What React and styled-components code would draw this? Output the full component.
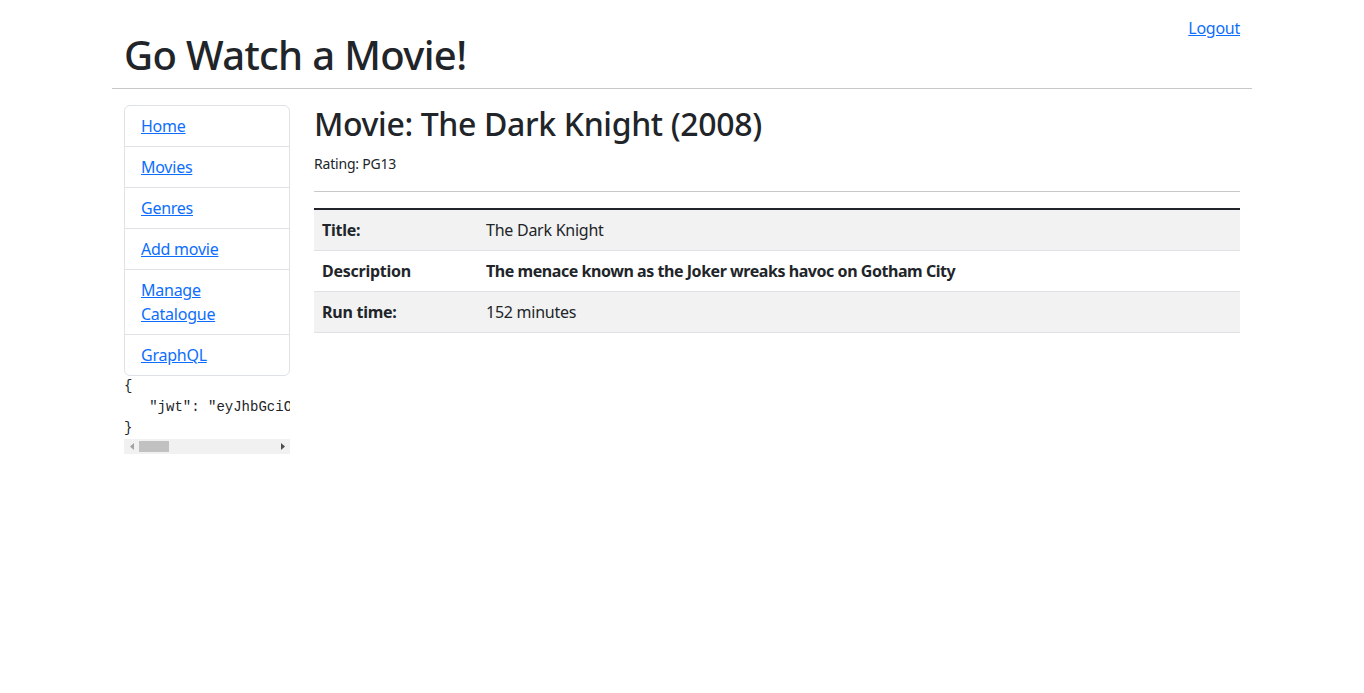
import React from "react";
import styled, { createGlobalStyle } from "styled-components";

const GlobalStyle = createGlobalStyle`
  *, *::before, *::after { box-sizing: border-box; }
  html, body { margin: 0; padding: 0; background: #fff; }
  body {
    font-family: "Noto Sans", "Open Sans", sans-serif;
    font-size: 16px;
    line-height: 1.5;
    letter-spacing: -0.25px;
    color: #212529;
  }
`;

const Container = styled.div`
  width: 1140px;
  margin: 0 auto;
`;

const Header = styled.header`
  display: flex;
  justify-content: space-between;
  align-items: flex-start;
  padding: 0 12px;
`;

const Title = styled.h1`
  margin: 31px 0 9px;
  font-size: 40px;
  line-height: 48px;
  font-weight: 500;
  letter-spacing: -0.65px;
`;

const Link = styled.a`
  color: #0d6efd;
  text-decoration: underline;
  cursor: pointer;
`;

const LogoutLink = styled(Link)`
  margin-top: 16px;
  line-height: 24px;
`;

const Rule = styled.hr`
  margin: 0 0 16px;
  border: 0;
  border-top: 1px solid #212529;
  opacity: 0.25;
`;

const Body = styled.div`
  display: grid;
  grid-template-columns: 190px 950px;
`;

const Side = styled.aside`
  padding: 0 12px;
  min-width: 0;
`;

const Main = styled.main`
  padding: 0 12px;
  min-width: 0;
`;

const Nav = styled.nav`
  display: flex;
  flex-direction: column;
  border: 1px solid #dee2e6;
  border-radius: 6px;
`;

const NavItem = styled.div`
  padding: 8px 16px;
  line-height: 24px;
  border-bottom: ${(p) => (p.$last ? "0" : "1px solid #dee2e6")};
`;

const CodeBox = styled.div`
  margin-bottom: 16px;
`;

const Pre = styled.pre`
  margin: 0;
  font-family: "Liberation Mono", "DejaVu Sans Mono", monospace;
  font-size: 14px;
  line-height: 21px;
  letter-spacing: normal;
  overflow: hidden;
  color: #212529;
`;

const ScrollBar = styled.div`
  display: flex;
  align-items: stretch;
  height: 15px;
  background: #f1f1f1;
`;

const ScrollArrow = styled.div`
  width: 15px;
  flex: none;
  display: flex;
  align-items: center;
  justify-content: center;
  color: ${(p) => (p.$disabled ? "#a3a3a3" : "#505050")};
`;

const ScrollTrack = styled.div`
  flex: 1;
  display: flex;
  align-items: center;
`;

const ScrollThumb = styled.div`
  width: 30px;
  height: 11px;
  background: #c1c1c1;
`;

const Heading = styled.h2`
  margin: 0 0 8px;
  font-size: 32px;
  line-height: 38.4px;
  font-weight: 500;
  letter-spacing: -0.35px;
`;

const Meta = styled.div`
  font-size: 14px;
  line-height: 24px;
  padding-top: 1px;
  height: 24px;
  margin-bottom: 16px;
  letter-spacing: -0.2px;
`;

const Table = styled.table`
  width: 100%;
  border-collapse: separate;
  border-spacing: 0;
  border-top: 2px solid #212529;
  margin-bottom: 16px;
`;

const Row = styled.tr`
  background: ${(p) => (p.$striped ? "#f2f2f2" : "#fff")};
`;

const Cell = styled.td`
  padding: 8px;
  line-height: 24px;
  border-bottom: 1px solid #dee2e6;
  font-weight: ${(p) => (p.$bold ? 700 : 400)};
  letter-spacing: ${(p) => (p.$tight ? "-0.45px" : "-0.25px")};
  width: ${(p) => p.$width || "auto"};
  vertical-align: top;
`;

const token =
  "eyJhbGciOiJIUzI1NiIsInR5cCI6IkpXVCJ9.eyJhdWQiOiJleGFtcGxlLmNvbSIsImV4cCI6MTcwMDAwMDkwMCwiaWF0IjoxNzAwMDAwMDAwLCJpc3MiOiJleGFtcGxlLmNvbSIsIm5hbWUiOiJBZG1pbiBVc2VyIiwic3ViIjoiMSIsInR5cCI6IkpXVCJ9.Xy7zQ3kLm9vP2aB4cD6eF8gH0iJ1kL3mN5oP7qR9sT0";

const jwtJson = JSON.stringify({ jwt: token }, null, 3);

const navItems = ["Home", "Movies", "Genres", "Add movie", "Manage Catalogue", "GraphQL"];

const rows = [
  { label: "Title:", value: "The Dark Knight", boldValue: false },
  { label: "Description", value: "The menace known as the Joker wreaks havoc on Gotham City", boldValue: true },
  { label: "Run time:", value: "152 minutes", boldValue: false },
];

const Arrow = ({ dir }) => (
  <svg width="4" height="7" viewBox="0 0 4 7" aria-hidden="true">
    {dir === "left" ? (
      <path d="M4 0 L0 3.5 L4 7 Z" fill="currentColor" />
    ) : (
      <path d="M0 0 L4 3.5 L0 7 Z" fill="currentColor" />
    )}
  </svg>
);

export default function App() {
  return (
    <>
      <GlobalStyle />
      <Container>
        <Header>
          <Title>Go Watch a Movie!</Title>
          <LogoutLink href="#!">Logout</LogoutLink>
        </Header>
        <Rule />
        <Body>
          <Side>
            <Nav>
              {navItems.map((item, i) => (
                <NavItem key={item} $last={i === navItems.length - 1}>
                  <Link href="#!">{item}</Link>
                </NavItem>
              ))}
            </Nav>
            <CodeBox>
              <Pre>{jwtJson}</Pre>
              <ScrollBar>
                <ScrollArrow $disabled>
                  <Arrow dir="left" />
                </ScrollArrow>
                <ScrollTrack>
                  <ScrollThumb />
                </ScrollTrack>
                <ScrollArrow>
                  <Arrow dir="right" />
                </ScrollArrow>
              </ScrollBar>
            </CodeBox>
          </Side>
          <Main>
            <Heading>Movie: The Dark Knight (2008)</Heading>
            <Meta>Rating: PG13</Meta>
            <Rule />
            <Table>
              <tbody>
                {rows.map((r, i) => (
                  <Row key={r.label} $striped={i % 2 === 0}>
                    <Cell $bold $width="164px">{r.label}</Cell>
                    <Cell $bold={r.boldValue} $tight={r.boldValue}>{r.value}</Cell>
                  </Row>
                ))}
              </tbody>
            </Table>
          </Main>
        </Body>
      </Container>
    </>
  );
}
